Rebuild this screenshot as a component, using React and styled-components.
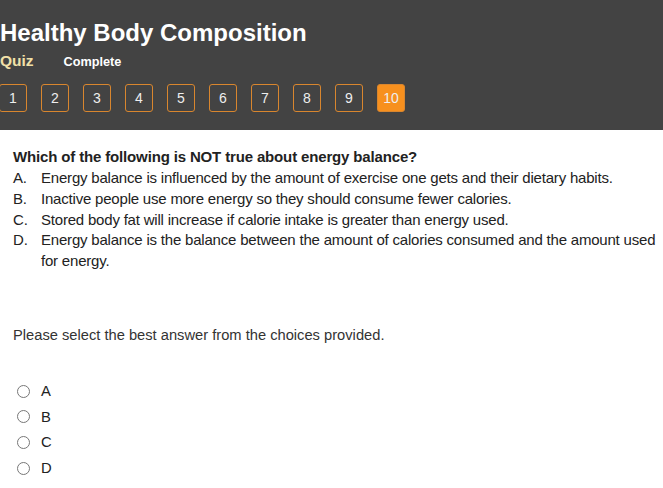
import React from "react";
import styled, { createGlobalStyle } from "styled-components";

const Global = createGlobalStyle`
  html, body { margin: 0; padding: 0; background: #fff; }
  body { font-family: "Liberation Sans", Arial, sans-serif; color: #333; }
`;

const Header = styled.header`
  background: #434343;
  height: 130px;
  box-sizing: border-box;
  padding-top: 18px;
  overflow: hidden;
`;

const Title = styled.h1`
  margin: 0;
  font-size: 24px;
  font-weight: bold;
  color: #fff;
  line-height: 30px;
`;

const SubRow = styled.div`
  display: flex;
  align-items: baseline;
  gap: 30px;
  margin-top: 4px;
`;

const Quiz = styled.span`
  font-size: 15.5px;
  font-weight: bold;
  color: #f1e0a8;
`;

const Status = styled.span`
  font-size: 12.7px;
  font-weight: bold;
  color: #fff;
`;

const Pager = styled.div`
  display: flex;
  gap: 14px;
  margin-top: 14px;
  margin-left: -1px;
`;

const PageBtn = styled.div`
  width: 28px;
  height: 28px;
  box-sizing: border-box;
  border: 1px solid #d9862e;
  border-radius: 3px;
  background: ${(p) => (p.$active ? "#f7901e" : "transparent")};
  color: #eee;
  font-size: 14px;
  display: flex;
  align-items: center;
  justify-content: center;
`;

const Body = styled.main`
  padding: 17px 0 0 13px;
`;

const Question = styled.div`
  font-size: 15px;
  letter-spacing: -0.2px;
  color: #222;
`;

const QTitle = styled.div`
  font-weight: bold;
  letter-spacing: -0.15px;
  line-height: 20px;
`;

const OptList = styled.div`
  display: flex;
  flex-direction: column;
  margin-top: 1px;
`;

const Opt = styled.div`
  display: flex;
  line-height: 20.8px;
`;

const OptLetter = styled.span`
  width: 28px;
  flex: none;
`;

const Prompt = styled.p`
  margin: 55px 0 0;
  font-size: 14.7px;
  color: #333;
`;

const Radios = styled.div`
  display: flex;
  flex-direction: column;
  margin-top: 39px;
  gap: 7px;
`;

const RadioRow = styled.label`
  display: flex;
  align-items: center;
  height: 18.6px;
  font-size: 14.8px;
  color: #222;
`;

const Circle = styled.span`
  width: 11px;
  height: 11px;
  border: 1px solid #777;
  border-radius: 50%;
  margin-left: 4px;
  margin-right: 11px;
`;

const options = [
  ["A.", "Energy balance is influenced by the amount of exercise one gets and their dietary habits."],
  ["B.", "Inactive people use more energy so they should consume fewer calories."],
  ["C.", "Stored body fat will increase if calorie intake is greater than energy used."],
  ["D.", "Energy balance is the balance between the amount of calories consumed and the amount used for energy."],
];

export default function App() {
  return (
    <>
      <Global />
      <Header>
        <Title>Healthy Body Composition</Title>
        <SubRow>
          <Quiz>Quiz</Quiz>
          <Status>Complete</Status>
        </SubRow>
        <Pager>
          {Array.from({ length: 10 }, (_, i) => (
            <PageBtn key={i} $active={i === 9}>{i + 1}</PageBtn>
          ))}
        </Pager>
      </Header>
      <Body>
        <Question>
          <QTitle>Which of the following is NOT true about energy balance?</QTitle>
          <OptList>
            {options.map(([l, t]) => (
              <Opt key={l}>
                <OptLetter>{l}</OptLetter>
                <span>{t}</span>
              </Opt>
            ))}
          </OptList>
        </Question>
        <Prompt>Please select the best answer from the choices provided.</Prompt>
        <Radios>
          {["A", "B", "C", "D"].map((l) => (
            <RadioRow key={l}>
              <Circle />
              {l}
            </RadioRow>
          ))}
        </Radios>
      </Body>
    </>
  );
}
